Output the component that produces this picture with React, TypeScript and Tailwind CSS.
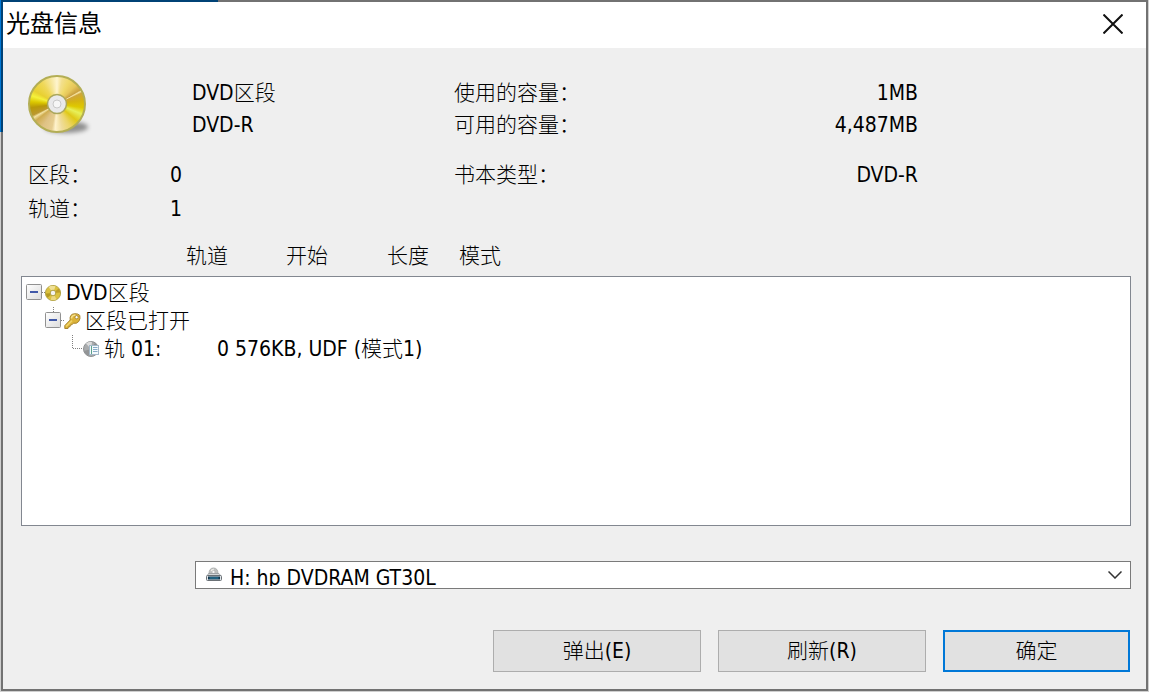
import React, { useState } from 'react';

const LargeDisc = () => (
  <div className="relative size-[58px]" aria-hidden="true">
    <div className="absolute bottom-0 left-4 h-3 w-[44px] rounded-[50%] bg-black/40 blur-[2px]" />
    <div className="absolute inset-0 rounded-full border-2 border-[#b3ae55] bg-[conic-gradient(#fff5cf_0deg,#f3df8c_12deg,#f0d968_28deg,#e6c65a_45deg,#c9a040_59deg,#f7e6a6_62deg,#cfa63a_66deg,#d6b410_82deg,#dfc900_98deg,#e7f05a_112deg,#dfc817_130deg,#ecd568_150deg,#efdc9a_168deg,#fff2cc_184deg,#e6cd90_192deg,#dfc285_212deg,#cfac50_232deg,#f3e2a2_240deg,#bb9830_245deg,#b89808_262deg,#dcc800_275deg,#f5f23c_288deg,#e8d030_300deg,#efd858_325deg,#f6e69a_345deg,#fff5cf_360deg)]" />
    <svg viewBox="0 0 58 58" className="absolute inset-0 size-full">
      <circle cx="29" cy="29" r="9.5" fill="#e9e9ea" stroke="#aba75c" strokeWidth="1.5" />
      <circle cx="29" cy="29" r="4" fill="#f6f6f6" stroke="#c9c9c9" strokeWidth="1" />
    </svg>
  </div>
);

const SmallDisc = () => (
  <svg width="17" height="17" viewBox="0 0 17 17" aria-hidden="true">
    <circle cx="8" cy="8" r="7.6" fill="#dcc23e" stroke="#b5a64a" strokeWidth="1" />
    <path d="M8 8 L3.6 2 A7.2 7.2 0 0 1 10.500 1.300Z" fill="#efe096" />
    <path d="M8 8 L0.9 8.5 A7.2 7.2 0 0 0 2.600 12.800Z" fill="#b59a20" />
    <path d="M8 8 L15.200 7.500 A7.2 7.2 0 0 0 13.700 3.500Z" fill="#bd9d28" />
    <path d="M8 8 L11.500 14.300 A7.2 7.2 0 0 1 5.600 14.800Z" fill="#ecd884" />
    <circle cx="8" cy="8" r="2.8" fill="#f4f4f2" stroke="#b1a040" strokeWidth="1" />
  </svg>
);

const KeyIcon = () => (
  <svg width="17" height="17" viewBox="0 0 17 17" aria-hidden="true">
    <path
      d="M6.200 7 L0.800 12.600 L0.800 15.500 L4 15.500 L4.400 13.900 L6 13.700 L6.400 12 L8.200 11.600 L9.400 10.200 Q12.800 11 14.800 8.400 Q16.600 5.800 15.800 2.400 Q14.200 0.500 10.600 0.700 Q5.200 1.200 6.200 7Z"
      fill="#dcb338"
      stroke="#a88530"
      strokeWidth="1"
      strokeLinejoin="round"
    />
    <path d="M7.500 5.500 Q7.600 2.200 11.500 1.900" stroke="#f6e08a" strokeWidth="1.5" fill="none" />
    <path d="M2 13.500 L8 7.600" stroke="#f0d468" strokeWidth="1.5" />
    <circle cx="12.600" cy="4.200" r="1.600" fill="#fff" stroke="#94701a" strokeWidth="0.7" />
  </svg>
);

const TrackIcon = () => (
  <svg width="17" height="17" viewBox="0 0 17 17" aria-hidden="true">
    <circle cx="8" cy="8" r="7.5" fill="#a9abad" stroke="#8f9193" strokeWidth="1" />
    <path d="M8 8 L3 2.500 A7 7 0 0 1 9 1Z" fill="#dcdcdc" />
    <path d="M8 8 L15 6 A7 7 0 0 0 12 2Z" fill="#8c8e90" />
    <path d="M8 8 L1 10 A7 7 0 0 0 6 14.500Z" fill="#929496" />
    <rect x="6.500" y="4.500" width="9" height="9" fill="#f5f9fc" stroke="#a3b8c8" />
    <path d="M8.500 5v8" stroke="#5ba38b" strokeWidth="1" />
    <path d="M10 6.500h4.500M10 8.500h4.500M10 10.500h4.500" stroke="#86abc8" strokeWidth="1" />
  </svg>
);

const DriveIcon = () => (
  <svg width="16" height="16" viewBox="0 0 16 16" aria-hidden="true">
    <path d="M3 7 Q3 1 7.500 1 Q12 1 12 7Z" fill="#bfc1c0" stroke="#a0a2a2" strokeWidth="0.8" />
    <path d="M4.500 3 L7 6 L8 1.500Z" fill="#f1f1ec" />
    <circle cx="7.500" cy="5" r="1.600" fill="#f5f5f5" stroke="#aaa" strokeWidth="0.6" />
    <path d="M2.500 6.500h10.500l2 2.500h-14z" fill="#d4d7d9" stroke="#8f9498" strokeWidth="0.7" />
    <rect x="0.500" y="8.500" width="15" height="5" rx="1" fill="#dfe5e9" stroke="#6a7075" />
    <path d="M2 11h12" stroke="#10334a" strokeWidth="3" />
    <path d="M3.500 11h9" stroke="#2f8fb5" strokeWidth="1" />
  </svg>
);

interface ExpanderProps {
  open: boolean;
  label: string;
  stub?: boolean;
  onToggle: () => void;
}

const Expander = ({ open, label, stub, onToggle }: ExpanderProps) => (
  <button type="button" aria-label={label} aria-expanded={open} onClick={onToggle} className="shrink-0">
    <svg width="19" height="28" viewBox="0 0 19 28" className="block">
      <defs>
        <linearGradient id="expander" x1="0" y1="0" x2="1" y2="1">
          <stop offset="0" stopColor="#fff" />
          <stop offset="1" stopColor="#dcdcdc" />
        </linearGradient>
      </defs>
      {stub && <path d="M8.5 0v5" stroke="#808080" strokeDasharray="1 1" />}
      <rect x="0.5" y="5.5" width="15" height="15" rx="1" fill="url(#expander)" stroke="#919191" />
      <path d="M4 13h8" stroke="#4058a8" strokeWidth="2" />
      {!open && <path d="M8 9v8" stroke="#4058a8" strokeWidth="2" />}
      <path d="M16 13.5h3" stroke="#808080" strokeDasharray="1 1" />
    </svg>
  </button>
);

const actions = [
  { label: '弹出(E)', style: 'w-[208px] border border-[#adadad]' },
  { label: '刷新(R)', style: 'w-[208px] border border-[#adadad]' },
  { label: '确定', style: 'w-[187px] border-2 border-[#0078d7]' },
];

export default function App() {
  const [discOpen, setDiscOpen] = useState(true);
  const [sessionOpen, setSessionOpen] = useState(true);

  return (
    <div
      lang="zh-CN"
      className="flex min-h-screen bg-[#cfcfcf] bg-[linear-gradient(#0078d7,#0078d7),linear-gradient(#0078d7,#0078d7)] bg-[size:218px_4px,4px_132px] bg-no-repeat px-px pb-px text-[21px] font-light text-black [font-family:'DejaVu_Sans_Condensed','Noto_Sans_CJK_SC',sans-serif]"
    >
      <main className="flex flex-1 flex-col border-2 border-black/45 bg-[#efefef] bg-clip-padding">
        <header className="flex h-[46px] items-center justify-between bg-white pb-[2px] pl-[3px] pr-[22px]">
          <h1 className="text-[24px] font-normal leading-8">光盘信息</h1>
          <button type="button" aria-label="关闭" className="p-px">
            <svg width="20" height="20" viewBox="0 0 20 20" className="block">
              <path d="M0.5 0.5l19 19M19.5 0.5l-19 19" stroke="#111" strokeWidth="2" />
            </svg>
          </button>
        </header>

        <div className="flex flex-1 flex-col pl-[18px] pr-[15px]">
          <section className="grid grid-cols-[164px_262px_1fr] pl-[7px] pr-[213px] pt-[29px] leading-8">
            <div className="-mt-[2px]">
              <LargeDisc />
            </div>
            <div>
              <p>DVD区段</p>
              <p>DVD-R</p>
            </div>
            <dl>
              <div className="flex justify-between">
                <dt>使用的容量：</dt>
                <dd>1MB</dd>
              </div>
              <div className="flex justify-between">
                <dt>可用的容量：</dt>
                <dd>4,487MB</dd>
              </div>
            </dl>
          </section>

          <section className="grid grid-cols-[426px_1fr] pl-[7px] pr-[213px] pt-[17px] leading-[34px]">
            <dl>
              <div className="flex">
                <dt className="w-[142px]">区段：</dt>
                <dd>0</dd>
              </div>
              <div className="flex">
                <dt className="w-[142px]">轨道：</dt>
                <dd>1</dd>
              </div>
            </dl>
            <dl>
              <div className="flex justify-between">
                <dt>书本类型：</dt>
                <dd>DVD-R</dd>
              </div>
            </dl>
          </section>

          <div className="flex pb-1 pl-[165px] pt-[14px] leading-8">
            <span className="w-[100px]">轨道</span>
            <span className="w-[101px]">开始</span>
            <span className="w-[72px]">长度</span>
            <span>模式</span>
          </div>

          <div className="min-h-[250px] flex-1 border border-[#828790] bg-white pl-1 pt-[2px] leading-7">
            <ul>
              <li>
                <div className="flex h-7 items-center">
                  <Expander open={discOpen} label="DVD区段" onToggle={() => setDiscOpen(!discOpen)} />
                  <SmallDisc />
                  <span className="pl-1">DVD区段</span>
                </div>
                {discOpen && (
                  <ul className="pl-[19px]">
                    <li>
                      <div className="flex h-7 items-center">
                        <Expander open={sessionOpen} label="区段已打开" stub onToggle={() => setSessionOpen(!sessionOpen)} />
                        <KeyIcon />
                        <span className="pl-1">区段已打开</span>
                      </div>
                      {sessionOpen && (
                        <ul className="pl-[27px]">
                          <li className="flex h-7 items-center">
                            <svg width="11" height="28" viewBox="0 0 11 28" aria-hidden="true">
                              <path d="M0.5 0v14M1 13.5h10" stroke="#808080" strokeDasharray="1 1" fill="none" />
                            </svg>
                            <TrackIcon />
                            <span className="w-[117px] pl-1">轨 01:</span>
                            <span>0 576KB, UDF (模式1)</span>
                          </li>
                        </ul>
                      )}
                    </li>
                  </ul>
                )}
              </li>
            </ul>
          </div>

          <div className="relative ml-[174px] mt-[35px]">
            <select
              aria-label="驱动器"
              className="block h-7 w-full appearance-none border border-[#7a7a7a] bg-white pb-[2px] pl-[34px] pt-1 leading-6"
            >
              <option>H: hp DVDRAM GT30L</option>
            </select>
            <div className="pointer-events-none absolute inset-0 flex items-center justify-between pb-px pl-[11px] pr-[9px]">
              <DriveIcon />
              <svg width="14" height="8" viewBox="0 0 14 8" aria-hidden="true">
                <path d="M0.5 0.5L7 7l6.500-6.500" stroke="#333" strokeWidth="1.500" fill="none" />
              </svg>
            </div>
          </div>

          <footer className="flex justify-end gap-[17px] pb-[17px] pr-px pt-[41px]">
            {actions.map((action) => (
              <button
                key={action.label}
                type="button"
                className={`h-[42px] bg-[#e1e1e1] pt-[2px] ${action.style}`}
              >
                {action.label}
              </button>
            ))}
          </footer>
        </div>
      </main>
    </div>
  );
}
